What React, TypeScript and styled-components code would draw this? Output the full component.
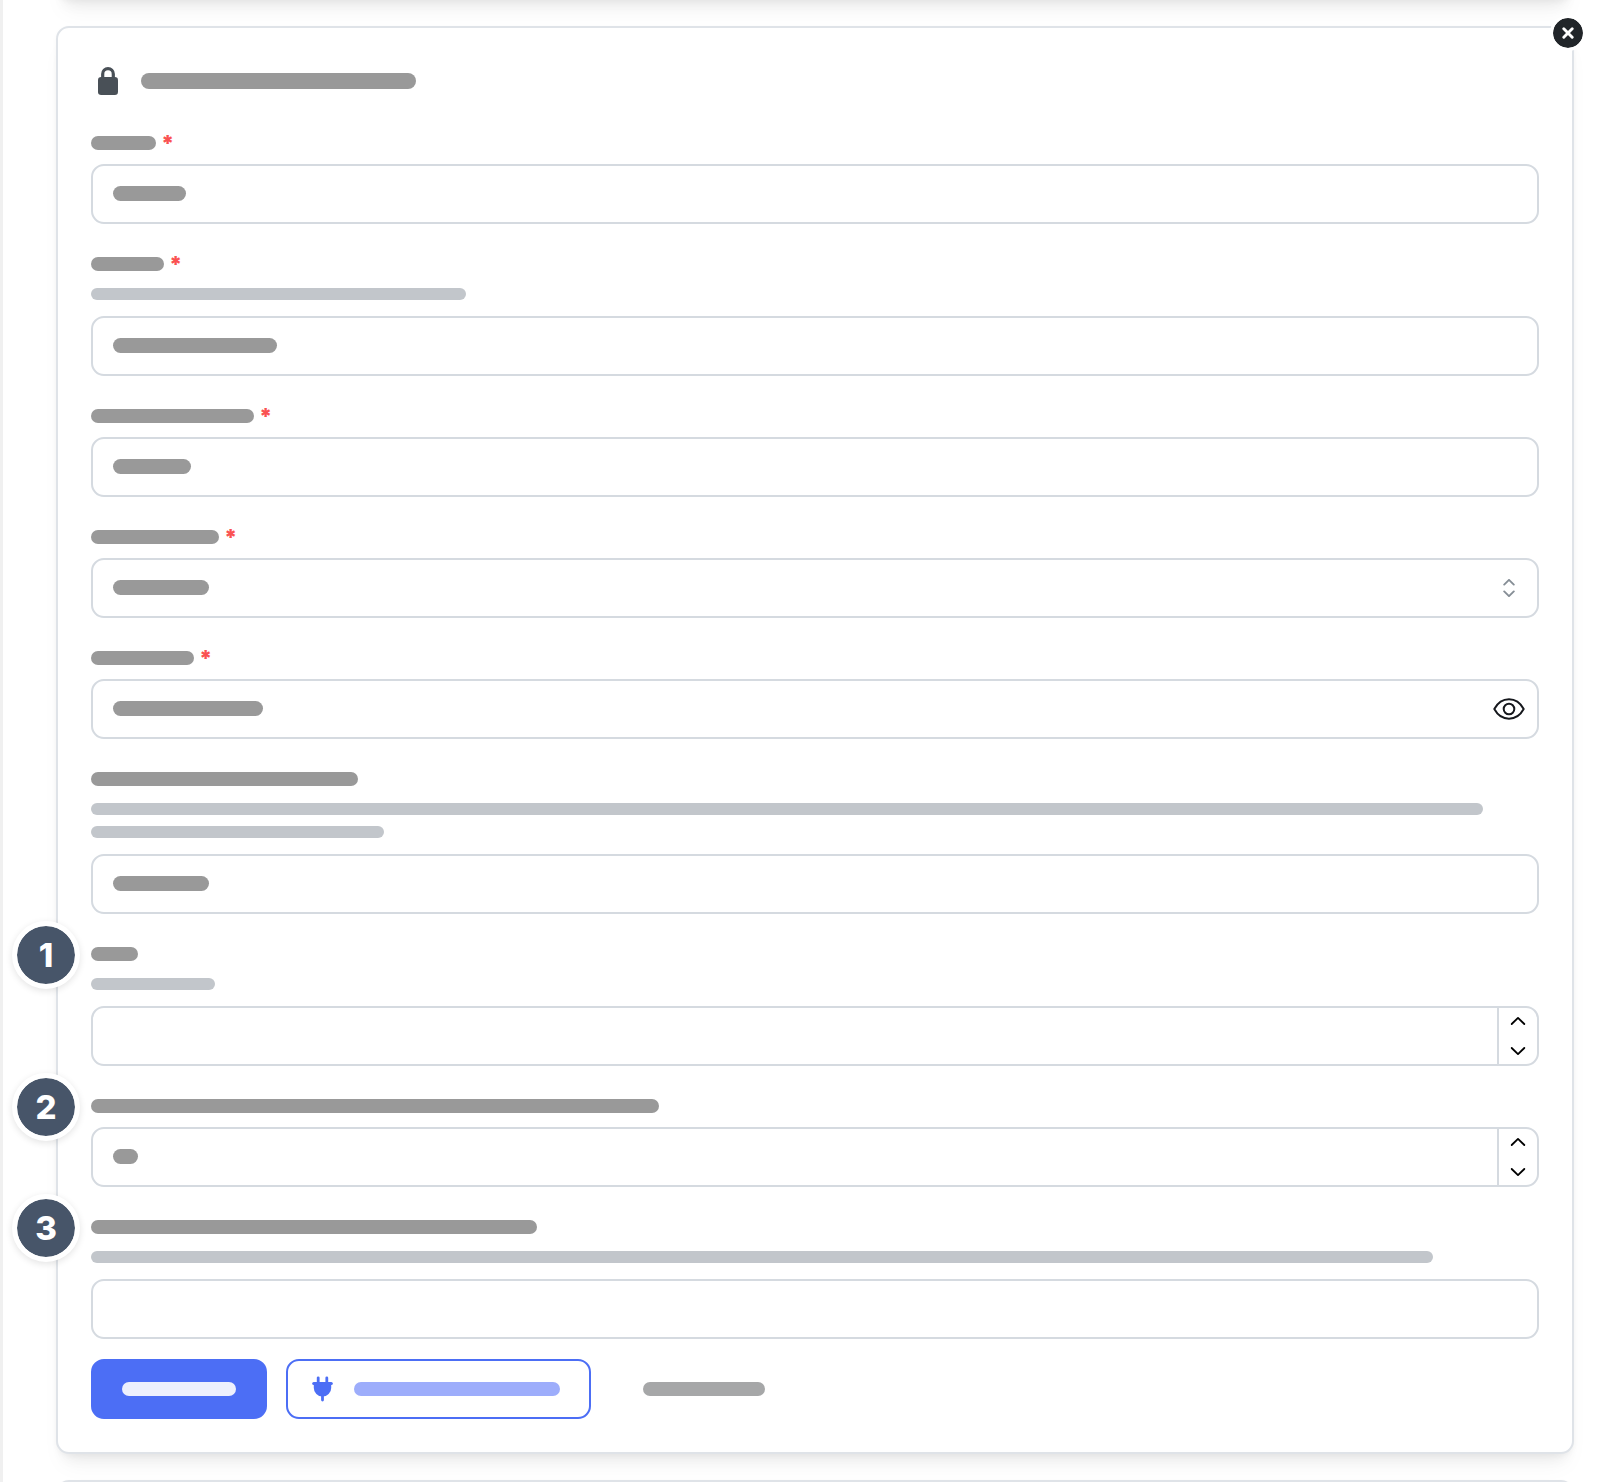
import React from "react";
import styled, { createGlobalStyle } from "styled-components";

const GlobalStyle = createGlobalStyle`
  *, *::before, *::after { box-sizing: border-box; }
  body {
    margin: 0;
    background: #fff;
    font-family: Inter, "Liberation Sans", sans-serif;
  }
  button, input, select { font: inherit; color: inherit; }
`;

const Page = styled.main`
  min-height: 100vh;
  overflow: hidden;
  display: flex;
  flex-direction: column;
  gap: 26px;
  padding: 0 26px 0 53px;
  border-left: 3px solid #f0f0f0;
  background: #fff;
`;

const Surface = styled.section`
  border: 2px solid #dfe3e8;
  border-radius: 13px;
  background: #fff;
  box-shadow:
    0 2px 5px rgba(0, 0, 0, 0.03),
    0 17px 24px -8px rgba(0, 0, 0, 0.05),
    0 12px 14px -8px rgba(0, 0, 0, 0.06);
`;

const PreviousCard = styled(Surface)`
  height: 40px;
  margin-top: -40px;
`;

const NextCard = styled(Surface)`
  height: 40px;
  margin-bottom: -38px;
`;

const Card = styled(Surface)`
  position: relative;
  padding: 33px;
`;

const Header = styled.header`
  display: flex;
  align-items: center;
  gap: 23px;
  height: 40px;
  margin-bottom: 35px;
  padding-left: 7px;
`;

type Tone = "text" | "muted" | "onPrimary" | "accent" | "subtle";

const tones: Record<Tone, string> = {
  text: "#999999",
  muted: "#c2c6cb",
  onPrimary: "#edf0fd",
  accent: "#9dadfb",
  subtle: "#a6a7a8",
};

const Bar = styled.span<{ $w: number; $h?: number; $tone?: Tone }>`
  display: block;
  width: ${(p) => p.$w}px;
  max-width: 100%;
  height: ${(p) => p.$h ?? 14}px;
  border-radius: 8px;
  background: ${(p) => tones[p.$tone ?? "text"]};
`;

const Form = styled.form`
  display: flex;
  flex-direction: column;
`;

const Fields = styled.div`
  display: flex;
  flex-direction: column;
  gap: 33px;
  margin-bottom: 20px;
`;

const Field = styled.div`
  position: relative;
`;

const Label = styled.label`
  display: flex;
  align-items: center;
  gap: 5px;
  height: 14px;
`;

const Required = styled.span`
  color: #fa5252;
  font-size: 22px;
  font-weight: 900;
  line-height: 16px;
`;

const Help = styled.div`
  display: flex;
  flex-direction: column;
  gap: 11px;
  margin: 17px 0 16px;
`;

const Control = styled.div<{ $spaced: boolean }>`
  position: relative;
  display: flex;
  height: 60px;
  margin-top: ${(p) => (p.$spaced ? 14 : 0)}px;
  border: 2px solid #d5dae0;
  border-radius: 13px;
  background: #fff;
  overflow: hidden;
`;

const Input = styled.input`
  flex: 1;
  min-width: 0;
  height: 100%;
  padding: 0 20px;
  border: 0;
  outline: 0;
  background: transparent;
  font-size: 24px;
  appearance: none;
  -moz-appearance: textfield;
  &::-webkit-inner-spin-button { appearance: none; margin: 0; }
`;

const Select = styled.select`
  flex: 1;
  padding: 0 20px;
  border: 0;
  outline: 0;
  background: transparent;
  font-size: 24px;
  appearance: none;
`;

const Value = styled.div`
  position: absolute;
  top: 20px;
  left: 20px;
  right: 60px;
  pointer-events: none;
`;

const Trailing = styled.span`
  position: absolute;
  top: 0;
  right: 0;
  width: 56px;
  height: 100%;
  display: grid;
  place-items: center;
  pointer-events: none;
`;

const IconButton = styled.button`
  width: 56px;
  display: grid;
  place-items: center;
  padding: 0;
  border: 0;
  background: transparent;
  cursor: pointer;
`;

const Stepper = styled.div`
  display: flex;
  flex-direction: column;
  gap: 4px;
  width: 40px;
  border-left: 2px solid #d5dae0;
`;

const StepButton = styled.button`
  flex: 1;
  display: grid;
  place-items: center;
  padding: 0;
  border: 0;
  background: transparent;
  cursor: pointer;
`;

const StepNumber = styled.span`
  position: absolute;
  top: -26px;
  left: -79px;
  width: 68px;
  height: 68px;
  display: grid;
  place-items: center;
  border: 5px solid #fff;
  border-radius: 50%;
  background: #475569;
  background-clip: padding-box;
  box-shadow: 0 2px 7px rgba(0, 0, 0, 0.11);
  color: #fff;
  font-size: 33px;
  font-weight: 800;
  line-height: 40px;
`;

const CloseButton = styled.button`
  position: absolute;
  top: -13px;
  right: -14px;
  width: 36px;
  height: 36px;
  display: grid;
  place-items: center;
  padding: 0;
  border: 3px solid #fff;
  border-radius: 50%;
  background: #212529;
  background-clip: padding-box;
  cursor: pointer;
`;

const Actions = styled.div`
  display: flex;
  flex-wrap: wrap;
  gap: 19px;
`;

const Button = styled.button<{ $kind: "primary" | "outline" | "plain" }>`
  display: flex;
  align-items: center;
  gap: 21px;
  height: 60px;
  padding: ${(p) => (p.$kind === "outline" ? "0 29px 0 24px" : p.$kind === "primary" ? "0 29px" : "0 31px")};
  border: 2px solid ${(p) => (p.$kind === "plain" ? "transparent" : "#4c6ef5")};
  border-radius: 13px;
  background: ${(p) => (p.$kind === "primary" ? "#4c6ef5" : "transparent")};
  cursor: pointer;
`;

const LockIcon = () => (
  <svg width="20" height="28" viewBox="0 0 20 28" aria-hidden="true">
    <path d="M4.7 11.5V7a5.3 5.3 0 0 1 10.6 0v4.5" fill="none" stroke="#495057" strokeWidth="3.2" />
    <rect y="10" width="20" height="18" rx="3.2" fill="#495057" />
  </svg>
);

const PlugIcon = () => (
  <svg width="21" height="26" viewBox="0 0 21 26" aria-hidden="true" fill="#4c6ef5">
    <rect x="4.8" y="0.4" width="2.8" height="8" rx="1.4" />
    <rect x="13.4" y="0.4" width="2.8" height="8" rx="1.4" />
    <rect x="0.2" y="6" width="20.6" height="3" rx="1.5" />
    <path d="M1.8 7.5h17.4v4.4a8.7 8.7 0 0 1-17.4 0z" />
    <rect x="9.1" y="18" width="2.8" height="7.4" rx="1.4" />
  </svg>
);

const SelectorIcon = () => (
  <svg width="12" height="18" viewBox="0 0 12 18" aria-hidden="true" fill="none" stroke="#868e96" strokeWidth="1.9" strokeLinecap="round" strokeLinejoin="round">
    <path d="M1.2 5.6 6 .9l4.8 4.7M1.2 12.4 6 17.1l4.8-4.7" />
  </svg>
);

const EyeIcon = () => (
  <svg width="32" height="22" viewBox="0 0 32 22" aria-hidden="true" fill="none" stroke="#16181d" strokeWidth="2" strokeLinejoin="round">
    <path d="M1.3 11C4.8 4.6 9.9 1.3 16 1.3S27.2 4.6 30.7 11C27.2 17.4 22.1 20.7 16 20.7S4.800 17.400 1.300 11z" />
    <circle cx="16" cy="11" r="5.3" />
  </svg>
);

const Chevron = ({ up }: { up?: boolean }) => (
  <svg width="16" height="10" viewBox="0 0 16 10" aria-hidden="true" fill="none" stroke="#000" strokeWidth="1.8" strokeLinecap="round" strokeLinejoin="round">
    <path d={up ? "M1.7 8 8 1.9 14.3 8" : "M1.7 2 8 8.1 14.3 2"} />
  </svg>
);

const CloseIcon = () => (
  <svg width="12" height="12" viewBox="0 0 12 12" aria-hidden="true" stroke="#fff" strokeWidth="2.9" strokeLinecap="round">
    <path d="M1.8 1.8 10.2 10.2M10.2 1.8 1.8 10.2" />
  </svg>
);

type FieldSpec = {
  id: string;
  kind?: "text" | "select" | "password" | "number";
  label: number;
  required?: boolean;
  help?: number[];
  value?: number;
  step?: number;
};

const fields: FieldSpec[] = [
  { id: "field-a", label: 65, required: true, value: 73 },
  { id: "field-b", label: 73, required: true, help: [375], value: 164 },
  { id: "field-c", label: 163, required: true, value: 78 },
  { id: "field-d", kind: "select", label: 128, required: true, value: 96 },
  { id: "field-e", kind: "password", label: 103, required: true, value: 150 },
  { id: "field-f", label: 267, help: [1392, 293], value: 96 },
  { id: "field-g", kind: "number", label: 47, help: [124], step: 1 },
  { id: "field-h", kind: "number", label: 568, value: 25, step: 2 },
  { id: "field-i", label: 446, help: [1342], step: 3 },
];

function FormField({ id, kind = "text", label, required, help, value, step }: FieldSpec) {
  return (
    <Field>
      {step && <StepNumber>{step}</StepNumber>}
      <Label htmlFor={id}>
        <Bar $w={label} />
        {required && <Required>*</Required>}
      </Label>
      {help && (
        <Help>
          {help.map((w) => (
            <Bar key={w} $w={w} $h={12} $tone="muted" />
          ))}
        </Help>
      )}
      <Control $spaced={!help}>
        {kind === "select" ? (
          <Select id={id}>
            <option value="" />
          </Select>
        ) : (
          <Input id={id} type={kind} autoComplete="off" />
        )}
        {value && (
          <Value>
            <Bar $w={value} $h={15} />
          </Value>
        )}
        {kind === "select" && (
          <Trailing>
            <SelectorIcon />
          </Trailing>
        )}
        {kind === "password" && (
          <IconButton type="button" aria-label="Show">
            <EyeIcon />
          </IconButton>
        )}
        {kind === "number" && (
          <Stepper>
            <StepButton type="button" aria-label="Increase">
              <Chevron up />
            </StepButton>
            <StepButton type="button" aria-label="Decrease">
              <Chevron />
            </StepButton>
          </Stepper>
        )}
      </Control>
    </Field>
  );
}

export default function App() {
  return (
    <>
      <GlobalStyle />
      <Page>
        <PreviousCard />
        <Card>
          <CloseButton type="button" aria-label="Close">
            <CloseIcon />
          </CloseButton>
          <Header>
            <LockIcon />
            <Bar $w={275} $h={16} />
          </Header>
          <Form onSubmit={(e) => e.preventDefault()}>
            <Fields>
              {fields.map((f) => (
                <FormField key={f.id} {...f} />
              ))}
            </Fields>
            <Actions>
              <Button type="submit" $kind="primary" aria-label="Save">
                <Bar $w={114} $tone="onPrimary" />
              </Button>
              <Button type="button" $kind="outline" aria-label="Connect">
                <PlugIcon />
                <Bar $w={206} $tone="accent" />
              </Button>
              <Button type="button" $kind="plain" aria-label="Cancel">
                <Bar $w={122} $tone="subtle" />
              </Button>
            </Actions>
          </Form>
        </Card>
        <NextCard />
      </Page>
    </>
  );
}
